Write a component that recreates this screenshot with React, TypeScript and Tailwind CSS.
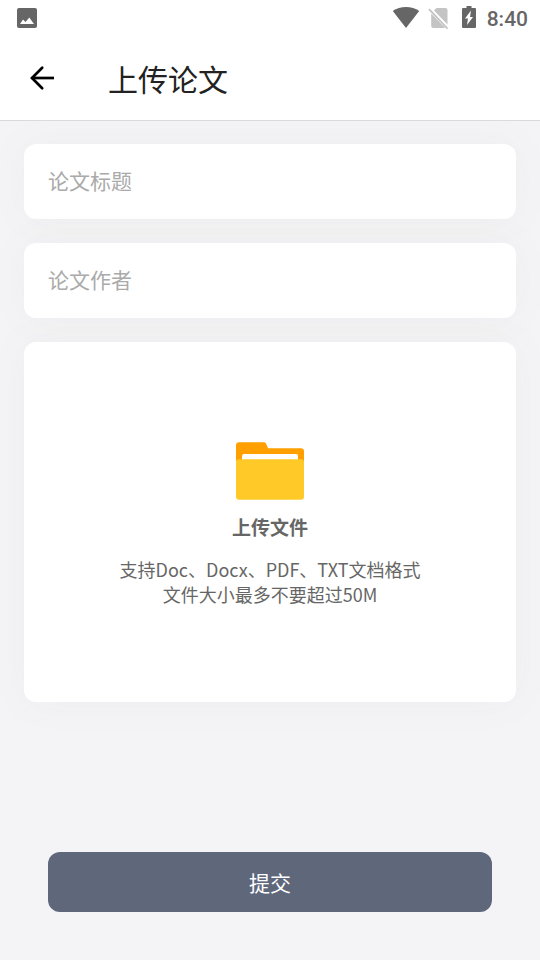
import { useState } from "react";

function StatusBar() {
  return (
    <div className="flex h-9 items-center justify-between pr-3 pl-4 text-[#666666]">
      <svg width="22" height="22" viewBox="0 0 22 22" aria-hidden="true">
        <rect x="1" y="1" width="20" height="20" rx="2" fill="currentColor" />
        <path d="M4 17l3-4.500 2.500 2.500 3.800-4.500 2.500 3.500 2.200 3z" fill="#ffffff" />
      </svg>

      <div className="flex items-center">
        <svg width="28" height="24" viewBox="0 0 28 24" aria-hidden="true">
          <path
            d="M14 22L0.800 5.100C4.500 2.400 9 1 14 1s9.500 1.400 13.200 4.100z"
            fill="currentColor"
          />
        </svg>
        <svg
          className="ml-2"
          width="22"
          height="24"
          viewBox="0 0 22 24"
          aria-hidden="true"
        >
          <path
            d="M8.500 2h9a2 2 0 0 1 2 2v14.500L6 4.500zM3.200 7.500V20a2 2 0 0 0 2 2h12z"
            fill="#c4c4c4"
          />
          <path d="M1 3.200l18.500 19.500" stroke="#c4c4c4" strokeWidth="1.800" />
        </svg>
        <svg
          className="ml-3"
          width="14"
          height="24"
          viewBox="0 0 14 24"
          aria-hidden="true"
        >
          <path
            d="M4.500 0h5v2H13q1 0 1 1v18q0 1-1 1H1q-1 0-1-1V3q0-1 1-1h3.500z"
            fill="currentColor"
          />
          <path d="M9 4.500L3 12.500h3l-1 6.500L11 11H8z" fill="#ffffff" />
        </svg>
        <span className="mt-0.5 ml-[11px] font-['Roboto',sans-serif] text-[21px] leading-6 font-medium">
          8:40
        </span>
      </div>
    </div>
  );
}

function BackIcon() {
  return (
    <svg width="26" height="26" viewBox="0 0 26 26" fill="none" aria-hidden="true">
      <path d="M3.500 13H26" stroke="#000000" strokeWidth="2.700" />
      <path
        d="M14.200 2.800L4 13l10.200 10.200"
        stroke="#000000"
        strokeWidth="2.700"
        strokeLinecap="round"
      />
    </svg>
  );
}

function FolderIcon() {
  return (
    <svg width="68" height="58" viewBox="0 0 68 58" aria-hidden="true">
      <path
        d="M3 0.300h24.500c1.500 0 2.300 0.600 2.800 1.700l1.700 4.300h33a3 3 0 0 1 3 3V40H0V3.300a3 3 0 0 1 3-3z"
        fill="#ffa000"
      />
      <path d="M8 12h52a2 2 0 0 1 2 2v10H6V14a2 2 0 0 1 2-2z" fill="#ffffff" />
      <rect y="17.200" width="68" height="40.500" rx="3" fill="#ffca28" />
    </svg>
  );
}

const cardClass = "rounded-xl bg-white shadow-[0_0_40px_rgba(120,120,60,0.05)]";
const inputClass =
  "h-[75px] px-6 pb-1 text-[21px] text-[#333333] outline-none placeholder:text-[#aaaaaa]";

export default function UploadPaper() {
  const [title, setTitle] = useState("");
  const [author, setAuthor] = useState("");

  return (
    <div className="flex min-h-screen flex-col bg-[#f4f4f7] font-['Noto_Sans_CJK_SC',sans-serif]">
      <header className="z-10 border-b border-[#dadada] bg-white">
        <StatusBar />
        <div className="flex h-21 items-center px-7">
          <button type="button" aria-label="返回" className="cursor-pointer">
            <BackIcon />
          </button>
          <h1 className="ml-13.5 text-3xl text-[#222222]">上传论文</h1>
        </div>
      </header>

      <form
        className="flex flex-1 flex-col gap-6 px-6 pt-[23px] pb-12"
        onSubmit={(e) => e.preventDefault()}
      >
        <input
          type="text"
          aria-label="论文标题"
          placeholder="论文标题"
          value={title}
          onChange={(e) => setTitle(e.target.value)}
          className={`${cardClass} ${inputClass}`}
        />
        <input
          type="text"
          aria-label="论文作者"
          placeholder="论文作者"
          value={author}
          onChange={(e) => setAuthor(e.target.value)}
          className={`${cardClass} ${inputClass}`}
        />

        <label
          className={`${cardClass} flex min-h-90 cursor-pointer flex-col items-center justify-center pt-[5px] text-center text-[#666666]`}
        >
          <FolderIcon />
          <span className="mt-[11px] text-[19px] leading-8 font-bold">上传文件</span>
          <span className="mt-3.5 text-lg leading-[25px]">
            支持Doc、Docx、PDF、TXT文档格式
            <br />
            文件大小最多不要超过50M
          </span>
          <input type="file" accept=".doc,.docx,.pdf,.txt" className="sr-only" />
        </label>

        <button
          type="submit"
          className="mx-6 mt-auto h-15 cursor-pointer rounded-xl bg-[#5f677b] pt-0.5 text-[21px] text-white"
        >
          提交
        </button>
      </form>
    </div>
  );
}
